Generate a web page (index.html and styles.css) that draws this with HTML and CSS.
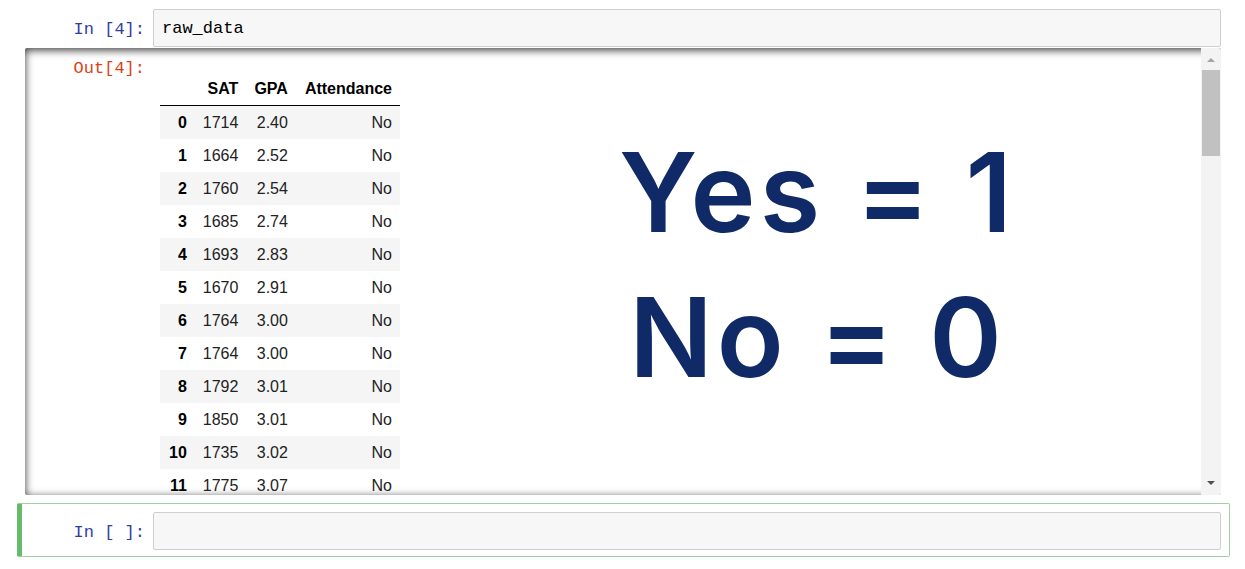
FILE: index.html
```html
<!DOCTYPE html>
<html>
<head>
<meta charset="utf-8">
<link rel="stylesheet" href="styles.css">
</head>
<body>
<div class="notebook">
  <div class="cell">
    <div class="row">
      <div class="prompt in-prompt">In&nbsp;[4]:</div>
      <div class="input-box">raw_data</div>
    </div>
    <div class="output-scroll">
      <div class="out-area">
        <div class="out-row">
          <div class="prompt out-prompt">Out[4]:</div>
          <div class="subarea">
            <table class="df">
              <thead>
                <tr><th></th><th>SAT</th><th>GPA</th><th>Attendance</th></tr>
              </thead>
              <tbody>
                <tr><th>0</th><td>1714</td><td>2.40</td><td>No</td></tr>
                <tr><th>1</th><td>1664</td><td>2.52</td><td>No</td></tr>
                <tr><th>2</th><td>1760</td><td>2.54</td><td>No</td></tr>
                <tr><th>3</th><td>1685</td><td>2.74</td><td>No</td></tr>
                <tr><th>4</th><td>1693</td><td>2.83</td><td>No</td></tr>
                <tr><th>5</th><td>1670</td><td>2.91</td><td>No</td></tr>
                <tr><th>6</th><td>1764</td><td>3.00</td><td>No</td></tr>
                <tr><th>7</th><td>1764</td><td>3.00</td><td>No</td></tr>
                <tr><th>8</th><td>1792</td><td>3.01</td><td>No</td></tr>
                <tr><th>9</th><td>1850</td><td>3.01</td><td>No</td></tr>
                <tr><th>10</th><td>1735</td><td>3.02</td><td>No</td></tr>
                <tr><th>11</th><td>1775</td><td>3.07</td><td>No</td></tr>
              </tbody>
            </table>
          </div>
          <div class="overlay">
            <div class="big">Yes = 1</div>
            <div class="big">No = 0</div>
          </div>
        </div>
      </div>
      <div class="scrollbar">
        <div class="arrow up"></div>
        <div class="track"><div class="thumb"></div></div>
        <div class="arrow down"></div>
      </div>
    </div>
  </div>
  <div class="cell selected">
    <div class="row">
      <div class="prompt in-prompt">In&nbsp;[&nbsp;]:</div>
      <div class="input-box"></div>
    </div>
  </div>
</div>
</body>
</html>
```

FILE: styles.css
```css
html, body {
  margin: 0;
  padding: 0;
  background: #ffffff;
}

.notebook {
  width: 1213px;
  margin-left: 17px;
}

.cell {
  border: 1px solid transparent;
  border-left: 5px solid transparent;
  padding: 8px 8px 7px 0;
}

.cell.selected {
  border-color: #9fd2a1;
  border-left-color: #66bb6a;
  border-radius: 2px;
  padding: 8px 8px 6px 0;
}

.row {
  display: flex;
  align-items: stretch;
}

.prompt {
  font-family: "Liberation Mono", monospace;
  font-size: 17px;
  line-height: 20px;
  text-align: right;
  box-sizing: border-box;
  padding-right: 8px;
  flex: none;
}

.row .prompt {
  width: 131px;
  padding-top: 11px;
}

.in-prompt {
  color: #303f9f;
}

.out-prompt {
  color: #d84315;
  width: 128px;
  padding-top: 11px;
}

.input-box {
  flex: 1;
  height: 38px;
  box-sizing: border-box;
  background: #f7f7f7;
  border: 1px solid #cfcfcf;
  border-radius: 2px;
  font-family: "Liberation Mono", monospace;
  font-size: 17px;
  line-height: 20px;
  padding: 9px 8px 7px;
  color: #000;
}

.output-scroll {
  margin-left: 3px;
  margin-top: 1px;
  height: 447px;
  display: flex;
  border-radius: 2px;
  box-shadow: inset 0 2px 8px rgba(0, 0, 0, 0.8);
  overflow: hidden;
}

.out-area {
  flex: 1;
  overflow: hidden;
}

.out-row {
  display: flex;
}

.subarea {
  padding-top: 25px;
  padding-left: 7px;
  flex: none;
}

.df {
  border-collapse: collapse;
  font-family: "Liberation Sans", Arial, sans-serif;
  font-size: 16px;
  line-height: 19px;
  color: #222;
}

.df th, .df td {
  text-align: right;
  padding: 7px 8px;
  white-space: nowrap;
}

.df th {
  font-weight: bold;
  color: #000;
}

.df th:first-child {
  padding-left: 9px;
}

.df tr > :last-child {
  padding-right: 8px;
  padding-left: 9px;
}

.df thead th {
  padding-top: 6px;
  padding-bottom: 7px;
  border-bottom: 1px solid #000;
}

.df tbody tr:nth-child(odd) {
  background: #f5f5f5;
}

.overlay {
  flex: 1;
  display: flex;
  flex-direction: column;
  align-items: center;
  padding-top: 72px;
  padding-left: 34px;
}

.big {
  font-family: Inter, "Open Sans", sans-serif;
  font-weight: 600;
  font-size: 110px;
  line-height: 145px;
  letter-spacing: 4px;
  color: #0f2a66;
  white-space: pre;
}

.scrollbar {
  width: 20px;
  flex: none;
  background: #f3f3f3;
  display: flex;
  flex-direction: column;
  padding-top: 2px;
  padding-bottom: 2px;
}

.arrow {
  height: 20px;
  display: flex;
  align-items: center;
  justify-content: center;
}

.arrow.up::before {
  content: "";
  border-left: 4px solid transparent;
  border-right: 4px solid transparent;
  border-bottom: 4px solid #a3a3a3;
}

.arrow.down::before {
  content: "";
  border-left: 4px solid transparent;
  border-right: 4px solid transparent;
  border-top: 4px solid #505050;
}

.track {
  flex: 1;
  padding: 0 1px;
}

.thumb {
  height: 86px;
  background: #c1c1c1;
}
```
